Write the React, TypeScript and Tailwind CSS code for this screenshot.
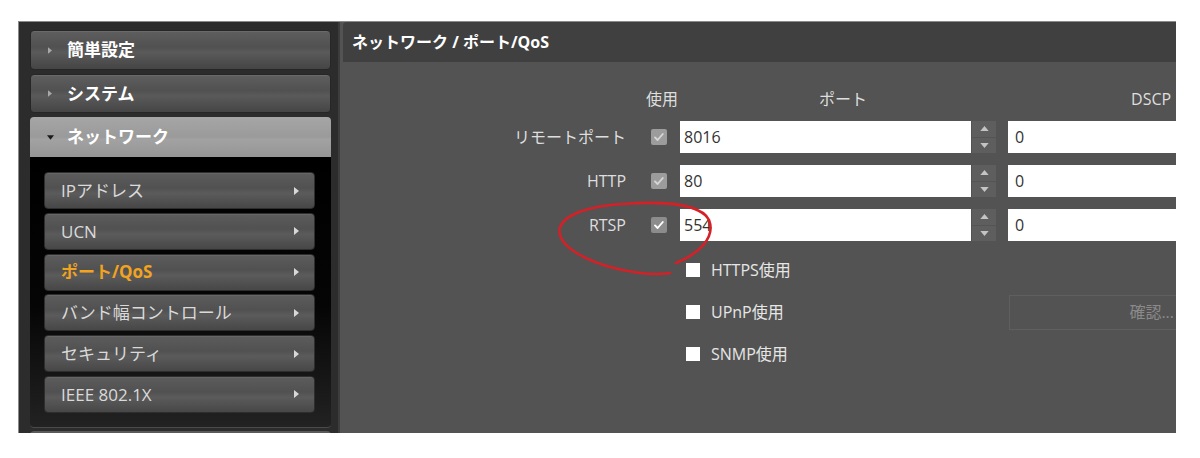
import React from 'react';

const mainItems = [
  { label: '簡単設定', h: 'h-[40px]' },
  { label: 'システム', h: 'h-[39px]' },
];

const subItems = ['IPアドレス', 'UCN', 'ポート/QoS', 'バンド幅コントロール', 'セキュリティ', 'IEEE 802.1X'];

const portRows = [
  { label: 'リモートポート', port: '8016', enabled: false },
  { label: 'HTTP', port: '80', enabled: false },
  { label: 'RTSP', port: '554', enabled: true },
];

const Tick: React.FC<{ bright: boolean }> = ({ bright }) => (
  <svg viewBox="0 0 16 16" className="w-4 h-4">
    <path
      d="M4 8.4l2.6 2.6 5.2-6"
      fill="none"
      stroke={bright ? '#ffffff' : '#d6d6d6'}
      strokeWidth="1.9"
      strokeLinecap="round"
      strokeLinejoin="round"
    />
  </svg>
);

const Spinner: React.FC = () => (
  <div className="ml-[1px] w-[24px] h-[32px] shrink-0 bg-[#5e5e5e] flex flex-col">
    <div className="flex-1 flex items-center justify-center border-b border-[#545454]">
      <svg viewBox="0 0 10 6" className="w-[9px] h-[5px]">
        <path d="M0 6L5 0l5 6z" fill="#c4c4c4" />
      </svg>
    </div>
    <div className="flex-1 flex items-center justify-center">
      <svg viewBox="0 0 10 6" className="w-[9px] h-[5px]">
        <path d="M0 0h10L5 6z" fill="#c4c4c4" />
      </svg>
    </div>
  </div>
);

const App: React.FC = () => {
  return (
    <div className="relative w-[1200px] h-[458px] bg-white pt-[21px] pl-[18px] overflow-hidden font-['Open_Sans','Noto_Sans_CJK_JP',sans-serif]">
      <div className="flex w-[1158px] h-[412px] bg-[#2c2c2c] border-t border-l border-[#8a8a8a] overflow-hidden">
        {/* Sidebar */}
        <div className="w-[321px] shrink-0 pl-[11px] pr-[7px] pt-[8px] flex flex-col border-r-[2px] border-[#3c3c3c]">
          {mainItems.map((item) => (
            <div
              key={item.label}
              className={`${item.h} mb-[4px] shrink-0 flex items-center rounded-[4px] border border-[#262626] bg-[linear-gradient(#5e5e5e,#515151_42%,#5a5a5a_56%,#454545)] shadow-[inset_0_1px_0_#6a6a6a]`}
            >
              <svg viewBox="0 0 5 8" className="ml-[17px] w-[4px] h-[7px]">
                <path d="M0 0l5 4-5 4z" fill="#a8a8a8" />
              </svg>
              <span className="ml-[15px] text-[17px] font-bold text-white">{item.label}</span>
            </div>
          ))}
          <div className="h-[40px] shrink-0 flex items-center rounded-t-[4px] bg-[linear-gradient(#a6a6a6,#9a9a9a_50%,#a2a2a2_56%,#959595)]">
            <svg viewBox="0 0 8 5" className="ml-[17px] w-[7px] h-[5px]">
              <path d="M0 0h8L4 5z" fill="#1a1a1a" />
            </svg>
            <span className="ml-[13px] text-[17px] font-bold text-white">ネットワーク</span>
          </div>
          <div className="h-[271px] shrink-0 bg-[linear-gradient(#000,#050505_55%,#222)] rounded-b-[4px] border-b border-[#4a4a4a] pt-[15px] pl-[14px] pr-[16px] flex flex-col gap-[3.8px]">
            {subItems.map((s) => {
              const active = s === 'ポート/QoS';
              return (
                <div
                  key={s}
                  className="h-[37px] shrink-0 flex items-center justify-between rounded-[4px] border border-[#2e2e2e] bg-[linear-gradient(#5c5c5c,#515151_42%,#5b5b5b_58%,#474747)] shadow-[inset_0_1px_0_#666]"
                >
                  <span className={`ml-[16px] text-[17px] ${active ? 'font-bold text-[#f2a31f]' : 'text-[#dadada]'}`}>{s}</span>
                  <svg viewBox="0 0 5 8" className="mr-[15px] w-[5px] h-[8px]">
                    <path d="M0 0l5 4-5 4z" fill="#d8d8d8" />
                  </svg>
                </div>
              );
            })}
          </div>
          <div className="mt-[3px] h-[20px] shrink-0 rounded-t-[4px] bg-[#5a5a5a]" />
        </div>

        {/* Content */}
        <div className="flex-1 bg-[#535353] flex flex-col overflow-hidden">
          <div className="ml-[3px] h-[40px] shrink-0 bg-[#404040] rounded-tl-[4px] flex items-center pl-[9px]">
            <span className="text-[16px] font-bold text-white">ネットワーク / ポート/QoS</span>
          </div>

          <div className="pt-[26px] flex text-[16px] text-[#dedede] h-[48px] shrink-0 leading-[22px]">
            <div className="w-[306px] shrink-0" />
            <span className="shrink-0">使用</span>
            <span className="ml-[141px] shrink-0">ポート</span>
            <span className="ml-[264px] shrink-0">DSCP</span>
          </div>

          <div className="mt-[11px] flex flex-col gap-[12px]">
            {portRows.map((r) => (
              <div key={r.label} className="flex items-center h-[32px] shrink-0">
                <div className="w-[286px] shrink-0 text-right text-[16px] text-[#dedede]">{r.label}</div>
                <div className={`ml-[25px] w-4 h-4 shrink-0 rounded-[2px] ${r.enabled ? 'bg-[#8c8c8c]' : 'bg-[#9c9c9c]'}`}>
                  <Tick bright={r.enabled} />
                </div>
                <div className="ml-[13px] w-[291px] h-[32px] shrink-0 bg-white flex items-center pl-[4px] text-[16px] text-[#333]">
                  {r.port}
                </div>
                <Spinner />
                <div className="ml-[12px] w-[200px] h-[32px] shrink-0 bg-white flex items-center pl-[7px] text-[16px] text-[#333]">
                  0
                </div>
              </div>
            ))}
          </div>

          <div className="mt-[18px] flex flex-col gap-[20px] text-[16px] text-[#e6e6e6]">
            <div className="flex items-center h-[22px] pl-[346px]">
              <div className="w-[14px] h-[14px] bg-white shrink-0" />
              <span className="ml-[11px]">HTTPS使用</span>
            </div>
            <div className="flex items-center h-[22px] pl-[346px]">
              <div className="w-[14px] h-[14px] bg-white shrink-0" />
              <span className="ml-[11px] w-[298px] shrink-0">UPnP使用</span>
              <div className="w-[200px] h-[35px] shrink-0 border border-[#5f5f5f] flex items-center justify-end pr-[34px] text-[#8a8a8a]">
                確認...
              </div>
            </div>
            <div className="flex items-center h-[22px] pl-[346px]">
              <div className="w-[14px] h-[14px] bg-white shrink-0" />
              <span className="ml-[11px]">SNMP使用</span>
            </div>
          </div>
        </div>
      </div>

      {/* hand-drawn annotation */}
      <svg className="absolute inset-0 pointer-events-none" width="1200" height="458" viewBox="0 0 1200 458">
        <path
          d="M676 263 C698 254 716 238 709 220 C701 204 664 201 622 204 C592 206 566 213 560 227 C555 246 588 262 618 269 C640 274 658 275 670 273"
          fill="none"
          stroke="#d42027"
          strokeWidth="2.6"
          strokeLinecap="round"
        />
      </svg>
    </div>
  );
};

export default App;
